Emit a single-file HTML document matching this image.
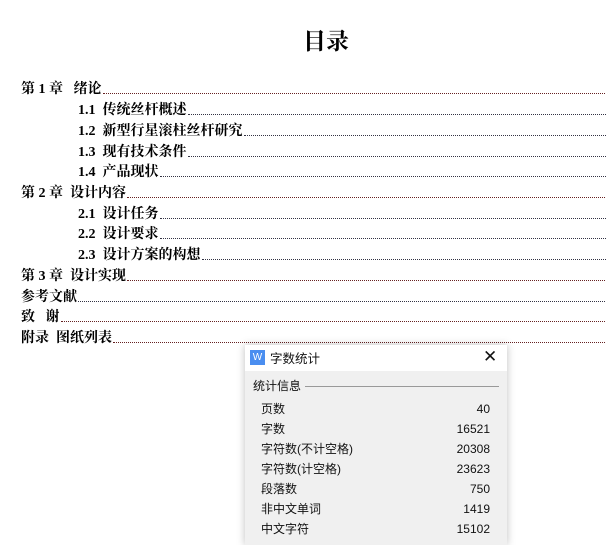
<!DOCTYPE html>
<html><head><meta charset="utf-8"><style>
body{margin:0;width:606px;height:538px;background:#fff;overflow:hidden;position:relative;font-family:"Liberation Serif","Noto Serif CJK SC",serif;}
h1{position:absolute;top:27px;left:0;width:652px;text-align:center;margin:0;font-size:23px;font-weight:bold;line-height:30px;}
.r{position:absolute;left:0;width:606px;height:20px;font-size:14px;font-weight:bold;line-height:20px;color:#000;display:flex;}
.r span{white-space:nowrap;}
.r i{flex:1;border-bottom:1px dotted #334;margin-bottom:6px;margin-left:1px;}
.r.c i{border-bottom-color:#622;}
.dlg{position:absolute;left:245px;top:345px;width:262px;height:200px;background:#f0f0f0;box-shadow:0 0 8px rgba(0,0,0,.25);font-family:"Liberation Sans","Noto Sans CJK SC",sans-serif;font-size:12px;color:#111;}
.tb{height:26px;background:#fff;position:relative;}
.tb .ic{position:absolute;left:5px;top:5px;width:15px;height:15px;background:#4a8ef0;color:#fff;font-size:10px;text-align:center;line-height:15px;}
.tb .t{position:absolute;left:25px;top:3px;font-size:12.5px;}
.tb .x{position:absolute;left:238px;top:2px;font-size:17px;}
.gi{position:absolute;left:8px;top:32px;}
.gl{position:absolute;left:60px;top:41px;width:194px;border-top:1px solid #999;}
.row{position:absolute;left:16px;width:229px;display:flex;justify-content:space-between;align-items:baseline;line-height:16px;}
</style></head><body>
<h1>目录</h1>
<div class="r c" style="top:80px;padding-left:21px"><span>第 1 章&nbsp;&nbsp; 绪论</span><i></i></div>
<div class="r" style="top:101px;padding-left:78px"><span>1.1&nbsp; 传统丝杆概述</span><i></i></div>
<div class="r" style="top:122px;padding-left:78px"><span>1.2&nbsp; 新型行星滚柱丝杆研究</span><i></i></div>
<div class="r" style="top:143px;padding-left:78px"><span>1.3&nbsp; 现有技术条件</span><i></i></div>
<div class="r" style="top:163px;padding-left:78px"><span>1.4&nbsp; 产品现状</span><i></i></div>
<div class="r c" style="top:184px;padding-left:21px"><span>第 2 章&nbsp; 设计内容</span><i></i></div>
<div class="r" style="top:205px;padding-left:78px"><span>2.1&nbsp; 设计任务</span><i></i></div>
<div class="r" style="top:225px;padding-left:78px"><span>2.2&nbsp; 设计要求</span><i></i></div>
<div class="r" style="top:246px;padding-left:78px"><span>2.3&nbsp; 设计方案的构想</span><i style="margin-right:4px"></i></div>
<div class="r c" style="top:267px;padding-left:21px"><span>第 3 章&nbsp; 设计实现</span><i></i></div>
<div class="r" style="top:288px;padding-left:21px"><span>参考文献</span><i></i></div>
<div class="r c" style="top:308px;padding-left:21px"><span>致&nbsp;&nbsp; 谢</span><i></i></div>
<div class="r c" style="top:329px;padding-left:21px"><span>附录&nbsp; 图纸列表</span><i></i></div>
<div class="dlg">
<div class="tb"><div class="ic">W</div><div class="t">字数统计</div><div class="x">✕</div></div>
<div class="gi">统计信息</div><div class="gl"></div>
<div class="row" style="top:56px"><span>页数</span><span>40</span></div>
<div class="row" style="top:76px"><span>字数</span><span>16521</span></div>
<div class="row" style="top:96px"><span>字符数(不计空格)</span><span>20308</span></div>
<div class="row" style="top:116px"><span>字符数(计空格)</span><span>23623</span></div>
<div class="row" style="top:136px"><span>段落数</span><span>750</span></div>
<div class="row" style="top:156px"><span>非中文单词</span><span>1419</span></div>
<div class="row" style="top:176px"><span>中文字符</span><span>15102</span></div>
</div>
</body></html>
